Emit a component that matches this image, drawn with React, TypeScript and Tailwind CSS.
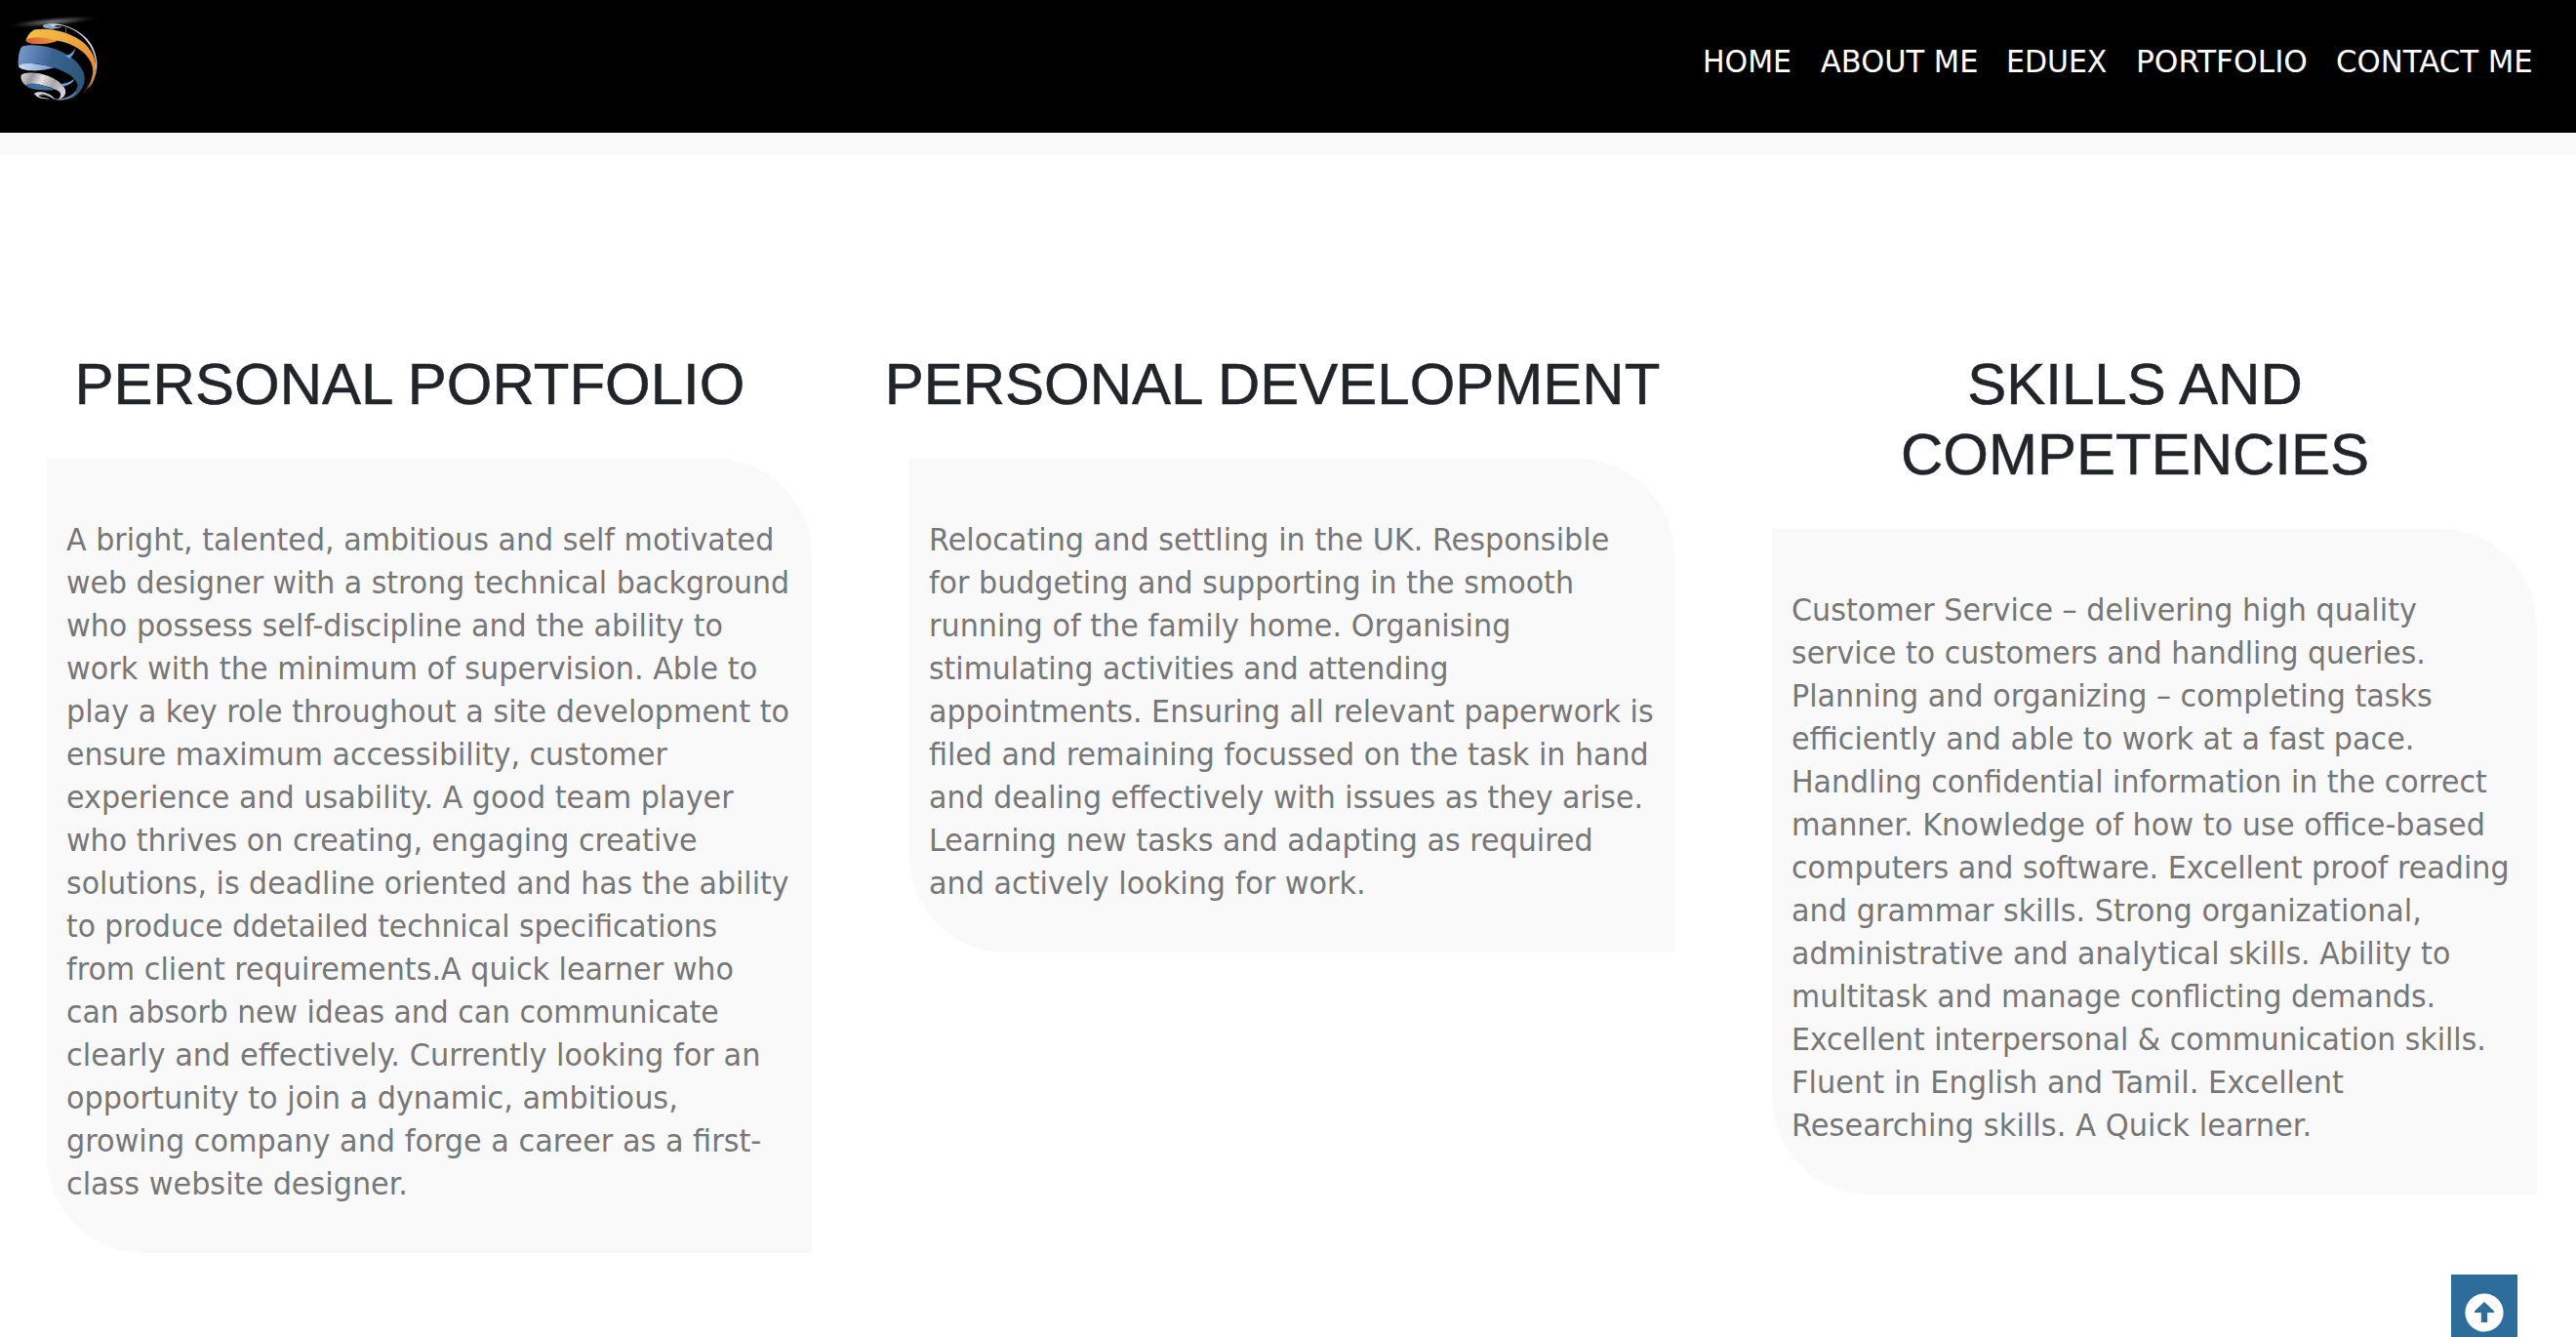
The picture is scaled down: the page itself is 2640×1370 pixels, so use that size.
import React, { useLayoutEffect, useRef } from "react";

const NAV = [
  { label: "HOME", cls: "w-[121px]", width: 91 },
  { label: "ABOUT ME", cls: "w-[190px]", width: 161 },
  { label: "EDUEX", cls: "w-[133px]", width: 103 },
  { label: "PORTFOLIO", cls: "w-[205px]", width: 176 },
  { label: "CONTACT ME", cls: "w-[246px]", width: 202 },
];

type Line = [string, number];

const COLUMNS: { title: string[]; lines: Line[] }[] = [
  {
    title: ["PERSONAL PORTFOLIO"],
    lines: [
      ["A bright, talented, ambitious and self motivated", 725],
      ["web designer with a strong technical background", 741],
      ["who possess self-discipline and the ability to", 673],
      ["work with the minimum of supervision. Able to", 708],
      ["play a key role throughout a site development to", 741],
      ["ensure maximum accessibility, customer", 616],
      ["experience and usability. A good team player", 684],
      ["who thrives on creating, engaging creative", 647],
      ["solutions, is deadline oriented and has the ability", 741],
      ["to produce ddetailed technical specifications", 667],
      ["from client requirements.A quick learner who", 684],
      ["can absorb new ideas and can communicate", 669],
      ["clearly and effectively. Currently looking for an", 711],
      ["opportunity to join a dynamic, ambitious,", 627],
      ["growing company and forge a career as a first-", 712],
      ["class website designer.", 350],
    ],
  },
  {
    title: ["PERSONAL DEVELOPMENT"],
    lines: [
      ["Relocating and settling in the UK. Responsible", 697],
      ["for budgeting and supporting in the smooth", 661],
      ["running of the family home. Organising", 596],
      ["stimulating activities and attending", 533],
      ["appointments. Ensuring all relevant paperwork is", 743],
      ["filed and remaining focussed on the task in hand", 738],
      ["and dealing effectively with issues as they arise.", 732],
      ["Learning new tasks and adapting as required", 681],
      ["and actively looking for work.", 448],
    ],
  },
  {
    title: ["SKILLS AND", "COMPETENCIES"],
    lines: [
      ["Customer Service – delivering high quality", 641],
      ["service to customers and handling queries.", 650],
      ["Planning and organizing – completing tasks", 657],
      ["efficiently and able to work at a fast pace.", 638],
      ["Handling confidential information in the correct", 713],
      ["manner. Knowledge of how to use office-based", 711],
      ["computers and software. Excellent proof reading", 736],
      ["and grammar skills. Strong organizational,", 646],
      ["administrative and analytical skills. Ability to", 675],
      ["multitask and manage conflicting demands.", 660],
      ["Excellent interpersonal & communication skills.", 712],
      ["Fluent in English and Tamil. Excellent", 566],
      ["Researching skills. A Quick learner.", 533],
    ],
  },
];

/** One line of text, narrowed so that it spans the given width. */
function Fit({ text, width }: { text: string; width: number }) {
  const ref = useRef<HTMLSpanElement>(null);
  useLayoutEffect(() => {
    const el = ref.current;
    if (!el) return;
    el.style.transform = `scaleX(${width / el.offsetWidth})`;
  }, [text, width]);
  return (
    <span ref={ref} className="inline-block origin-left whitespace-nowrap">
      {text}
    </span>
  );
}

function Logo() {
  return (
    <svg className="h-[136px] w-[160px]" viewBox="0 0 480 408" fill="none">
      <defs>
        <radialGradient id="glow">
          <stop offset="0" stopColor="#a8a8a8" stopOpacity=".75" />
          <stop offset=".5" stopColor="#777" stopOpacity=".4" />
          <stop offset="1" stopColor="#000" stopOpacity="0" />
        </radialGradient>
        <linearGradient id="gold" x1="90" y1="90" x2="290" y2="240" gradientUnits="userSpaceOnUse">
          <stop offset="0" stopColor="#f4c044" />
          <stop offset=".4" stopColor="#f0ae42" />
          <stop offset="1" stopColor="#ea8735" />
        </linearGradient>
        <linearGradient id="rust" x1="80" y1="0" x2="178" y2="0" gradientUnits="userSpaceOnUse">
          <stop offset="0" stopColor="#da5c32" />
          <stop offset="1" stopColor="#ee9d3e" />
        </linearGradient>
        <linearGradient id="blue" x1="60" y1="160" x2="250" y2="220" gradientUnits="userSpaceOnUse">
          <stop offset="0" stopColor="#7396cb" />
          <stop offset=".5" stopColor="#3c6390" />
          <stop offset="1" stopColor="#2b587b" />
        </linearGradient>
        <linearGradient id="pale" x1="57" y1="0" x2="170" y2="0" gradientUnits="userSpaceOnUse">
          <stop offset="0" stopColor="#d2def5" />
          <stop offset="1" stopColor="#6c96d2" />
        </linearGradient>
        <linearGradient id="silver" x1="64" y1="220" x2="200" y2="285" gradientUnits="userSpaceOnUse">
          <stop offset="0" stopColor="#e4e2e4" />
          <stop offset=".25" stopColor="#9a989c" />
          <stop offset=".45" stopColor="#e3e1e3" />
          <stop offset=".7" stopColor="#a7a4a9" />
          <stop offset="1" stopColor="#dad8dc" />
        </linearGradient>
      </defs>
      <ellipse cx="162" cy="67" rx="152" ry="16" fill="url(#glow)" transform="rotate(-5 162 67)" />
      <path d="M133 78C145 71 176 71 198 78C259 97 294 137 298 192C300 218 290 252 272 272C287 247 296 219 294 190C289 142 252 97 197 80C184 77 170 78 164 82C173 84 183 84 190 82C174 91 141 90 133 82Z" fill="#d5dbe2" />
      <path d="M133 78C143 73 157 75 163 82C173 85 183 84 190 82C174 91 141 90 133 82Z" fill="#86a9dc" />
      <path d="M298 190C299 216 290 250 270 270" stroke="#36582d" strokeWidth="1.5" />
      <path d="M79 126C84 111 92 97 108 91C155 84 207 98 245 122C282 147 302 187 292 225C287 250 272 270 253 288C282 258 293 223 280 192C262 155 224 134 178 125C143 119 104 111 79 126Z" fill="url(#gold)" />
      <path d="M79 125C93 110 135 113 179 125C162 130 145 136 117 135C98 135 82 132 79 125Z" fill="url(#rust)" />
      <path d="M201 84C204 90 204 96 202 105" stroke="#c88b35" strokeWidth="2" />
      <path d="M57 205C54 182 58 156 67 143C106 132 168 143 211 171C256 201 270 237 254 268C240 298 209 312 173 307C209 303 237 285 239 262C234 239 204 220 164 208C126 197 91 189 57 205Z" fill="url(#blue)" />
      <path d="M57 204C67 189 115 194 166 208C145 214 125 218 98 217C77 216 61 212 57 204Z" fill="url(#pale)" />
      <path d="M200 171C214 170 224 160 231 149C231 160 222 173 214 180Z" fill="#739bd8" />
      <path d="M64 233C69 223 85 222 109 224C151 228 194 252 201 277C204 293 193 303 179 306C190 294 189 284 174 277C147 265 107 252 80 263C69 255 64 245 64 233Z" fill="url(#silver)" />
      <path d="M79 262C91 250 129 258 169 275C150 279 121 278 103 274C91 272 84 268 79 262Z" fill="#3e6e9d" />
      <path d="M183 259C204 257 219 249 228 243C227 253 213 261 193 266Z" fill="#739bd8" />
      <path d="M105 288C110 281 130 281 145 287C158 292 165 298 167 304C159 301 153 294 138 290C127 288 118 291 119 295C128 302 146 301 154 304C131 305 113 301 105 288Z" fill="#d6d5d9" />
      <path d="M118 295C132 286 154 294 165 304C186 309 214 303 234 285" stroke="#c6cbd3" strokeWidth="2" />
    </svg>
  );
}

export default function App() {
  return (
    <div className="relative h-[1370px] w-[2640px] overflow-hidden bg-white font-['DejaVu_Sans',sans-serif] text-[32px]">
      <header className="flex h-[136px] justify-between bg-black">
        <Logo />
        <nav className="flex pt-[41px] leading-[44px] text-white">
          {NAV.map((n) => (
            <a key={n.label} className={"block " + n.cls}>
              <Fit text={n.label} width={n.width} />
            </a>
          ))}
        </nav>
      </header>
      <div className="h-[22px] bg-[#f9f9f9]" />
      <main className="grid grid-cols-[784px_784px_784px] items-start gap-[100px] pt-[200px] pl-[48px]">
        {COLUMNS.map((c) => (
          <section key={c.title[0]}>
            <h2 className="-ml-[40px] text-center font-['Liberation_Sans',Arial,sans-serif] text-[60px] leading-[72px] text-[#212529] [-webkit-text-stroke:0.5px_#212529]">
              {c.title.map((t) => (
                <span key={t} className="block whitespace-nowrap">
                  {t}
                </span>
              ))}
            </h2>
            <div className="mt-[40px] rounded-tr-[100px] rounded-bl-[100px] bg-[#f9f9f9] pt-[61px] pb-[49px] pl-[20px] leading-[44px] text-[#777777]">
              {c.lines.map(([text, width]) => (
                <p key={text} className="h-[44px]">
                  <Fit text={text} width={width} />
                </p>
              ))}
            </div>
          </section>
        ))}
      </main>
      <button className="absolute top-[1306px] left-[2512px] flex h-[78px] w-[68px] justify-center bg-[#2d6d9c] pt-[19px]">
        <svg className="h-[40px] w-[40px]" viewBox="0 0 40 40">
          <circle cx="20" cy="20" r="19.6" fill="#fff" />
          <path d="M20 9 30 18.5V20H23.2V30H16.8V20H10V18.5Z" fill="#2d6d9c" />
        </svg>
      </button>
    </div>
  );
}
